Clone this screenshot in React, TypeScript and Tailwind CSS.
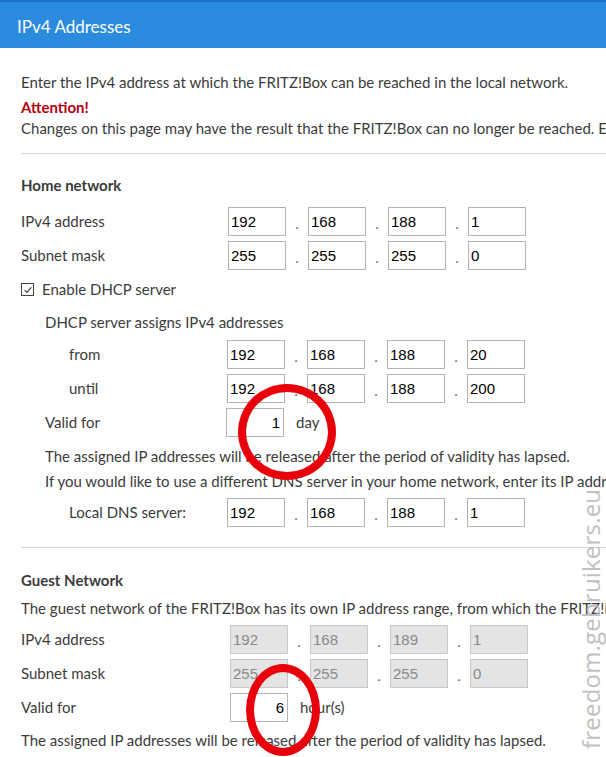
import React from "react";

const font = { fontFamily: "Lato, 'Open Sans', sans-serif" };

type IpProps = { parts: string[]; disabled?: boolean };

function IpInput({ parts, disabled }: IpProps) {
  return (
    <div className="flex items-center">
      {parts.map((p, i) => (
        <React.Fragment key={i}>
          {i > 0 && <span className="w-[22px] pt-[6px] text-center text-[13px] leading-none text-[#555]">.</span>}
          <div
            className={
              "h-[29px] w-[58px] border px-[2px] text-[15px] leading-[27px] font-['Liberation_Sans',sans-serif] " +
              (disabled ? "border-[#c8c8c8] bg-[#e4e4e4] text-[#8a8a8a]" : "border-[#b4b4b4] bg-white text-black")
            }
          >
            {p}
          </div>
        </React.Fragment>
      ))}
    </div>
  );
}

// label column is 207px wide from the page gutter; nested blocks shrink it
type RowProps = { label: string; labelClass?: string; children: React.ReactNode };

function Row({ label, labelClass = "w-[207px]", children }: RowProps) {
  return (
    <div className="flex h-[34px] items-center">
      <div className={"shrink-0 " + labelClass}>{label}</div>
      {children}
    </div>
  );
}

function ValidFor({ value, unit }: { value: string; unit: string }) {
  return (
    <div className="flex items-center">
      <div className="h-[29px] w-[58px] border border-[#b4b4b4] px-[3px] text-right text-[15px] leading-[27px] text-black font-['Liberation_Sans',sans-serif]">
        {value}
      </div>
      <span className="ml-[12px]">{unit}</span>
    </div>
  );
}

function Ring({ className }: { className: string }) {
  return <div className={"pointer-events-none absolute rounded-[50%] border-[8px] border-[#e8000b] " + className} />;
}

export default function App() {
  return (
    <div className="relative h-[757px] w-[606px] overflow-hidden bg-white text-[15px] text-[#3b3b3b]" style={font}>
      <div className="h-[48px] border-t-2 border-[#1c72c4] bg-[#2a8ade] pl-[17px] pt-[12px] text-[17px] text-white">
        IPv4 Addresses
      </div>

      <div className="pl-[21px]">
        <div className="whitespace-nowrap pt-[22px] leading-[25px]">
          <p>Enter the IPv4 address at which the FRITZ!Box can be reached in the local network.</p>
          <p className="font-bold text-[#b3000c]">Attention!</p>
          <p className="-mt-[4px]">Changes on this page may have the result that the FRITZ!Box can no longer be reached. Enter the new address.</p>
        </div>

        <div className="mt-[12px] border-t border-[#d6d6d6]" />

        <h2 className="mt-[20px] font-bold text-[#3b3b3b]">Home network</h2>
        <div className="mt-[8px]">
          <Row label="IPv4 address">
            <IpInput parts={["192", "168", "188", "1"]} />
          </Row>
          <Row label="Subnet mask">
            <IpInput parts={["255", "255", "255", "0"]} />
          </Row>
        </div>
        <label className="mt-[1px] flex h-[32px] items-center gap-[8px]">
          <span className="flex h-[13px] w-[13px] items-center justify-center border border-[#444]">
            <svg viewBox="0 0 12 12" className="h-[10px] w-[10px]">
              <path d="M2 6.2 L4.8 9 L10 2.8" fill="none" stroke="#333" strokeWidth="1.4" />
            </svg>
          </span>
          Enable DHCP server
        </label>

        <div className="pl-[24px]">
          <p className="mt-[6px] leading-[20px]">DHCP server assigns IPv4 addresses</p>
          <div className="mt-[6px]">
            <Row label="from" labelClass="w-[182px] pl-[24px]">
              <IpInput parts={["192", "168", "188", "20"]} />
            </Row>
            <Row label="until" labelClass="w-[182px] pl-[24px]">
              <IpInput parts={["192", "168", "188", "200"]} />
            </Row>
            <Row label="Valid for" labelClass="w-[181px]">
              <ValidFor value="1" unit="day" />
            </Row>
          </div>
          <div className="mt-[4px] whitespace-nowrap leading-[25px]">
            <p>The assigned IP addresses will be released after the period of validity has lapsed.</p>
            <p>If you would like to use a different DNS server in your home network, enter its IP address here.</p>
          </div>
          <div className="mt-[2px]">
            <Row label="Local DNS server:" labelClass="w-[182px] pl-[24px]">
              <IpInput parts={["192", "168", "188", "1"]} />
            </Row>
          </div>
        </div>

        <div className="mt-[17px] border-t border-[#d6d6d6]" />

        <h2 className="mt-[21px] font-bold">Guest Network</h2>
        <p className="mt-[6px] whitespace-nowrap leading-[22px]">
          The guest network of the FRITZ!Box has its own IP address range, from which the FRITZ!Box assigns addresses.
        </p>
        <div className="mt-[3px]">
          <Row label="IPv4 address" labelClass="w-[209px]">
            <IpInput parts={["192", "168", "189", "1"]} disabled />
          </Row>
          <Row label="Subnet mask" labelClass="w-[209px]">
            <IpInput parts={["255", "255", "255", "0"]} disabled />
          </Row>
          <Row label="Valid for" labelClass="w-[209px]">
            <ValidFor value="6" unit="hour(s)" />
          </Row>
        </div>
        <p className="mt-[5px] whitespace-nowrap leading-[22px]">
          The assigned IP addresses will be released after the period of validity has lapsed.
        </p>
      </div>

      <Ring className="left-[238px] top-[384px] h-[96px] w-[98px]" />
      <Ring className="left-[246px] top-[664px] h-[92px] w-[74px]" />

      <div className="pointer-events-none absolute left-[578px] top-[749px] origin-top-left -rotate-90 whitespace-nowrap text-[24px] leading-[25px] tracking-[0.2px] text-[#c0c0c0] font-['Open_Sans',sans-serif]">
        freedom.gebruikers.eu
      </div>
    </div>
  );
}
